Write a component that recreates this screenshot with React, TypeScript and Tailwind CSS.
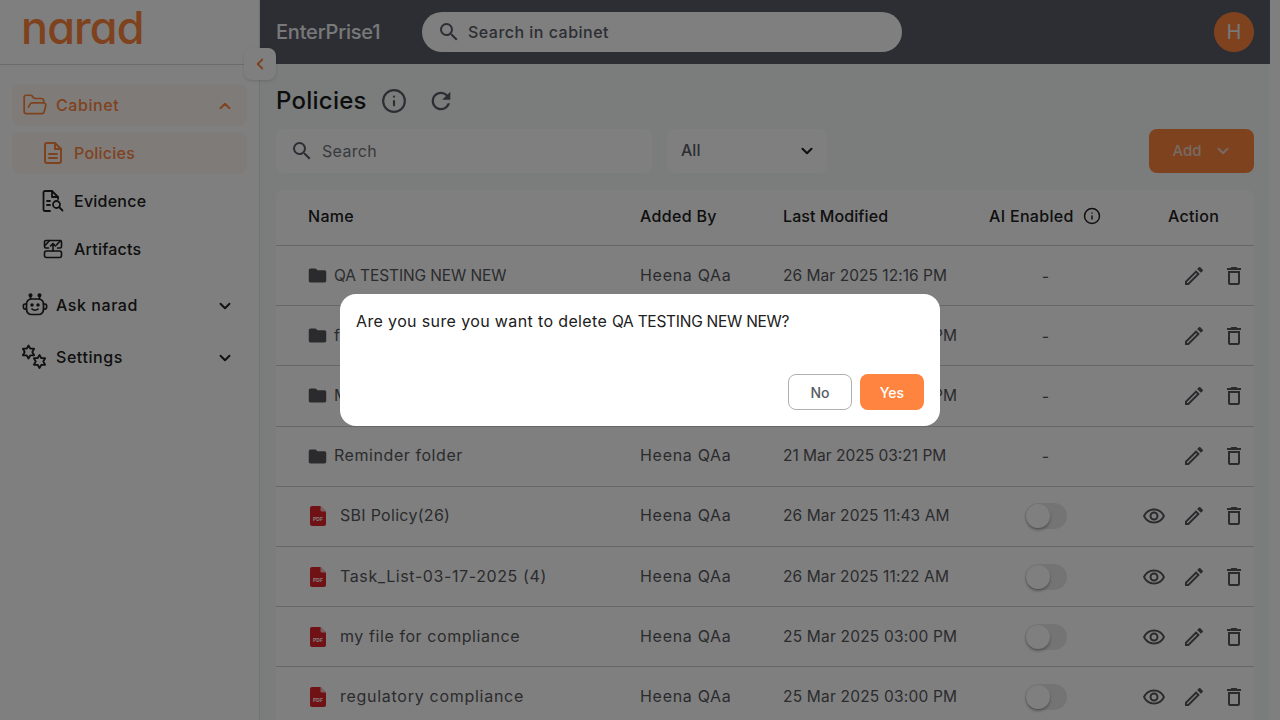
import { ChevronDown, ChevronLeft, ChevronUp, FolderOpen, Info } from 'lucide-react';
import { MdFolder, MdOutlineDelete, MdOutlineEdit, MdOutlineRemoveRedEye, MdRefresh, MdSearch } from 'react-icons/md';

interface Row {
  name: string;
  nameClass: string;
  type: 'folder' | 'pdf';
  date: string;
  dateClass: string;
}

const rows: Row[] = [
  { name: 'QA TESTING NEW NEW', nameClass: 'text-[15.500px] tracking-[-0.007em]', type: 'folder', date: '26 Mar 2025 12:16 PM', dateClass: 'tracking-[0.003em]' },
  { name: 'folder new', nameClass: '-mt-[2px] tracking-[0.035em]', type: 'folder', date: '25 Mar 2025 03:00 PM', dateClass: 'tracking-[0.013em]' },
  { name: 'My folder', nameClass: '-mt-[2px] tracking-[0.035em]', type: 'folder', date: '25 Mar 2025 03:00 PM', dateClass: 'tracking-[0.013em]' },
  { name: 'Reminder folder', nameClass: '-mt-[2px] tracking-[0.035em]', type: 'folder', date: '21 Mar 2025 03:21 PM', dateClass: '-mt-[2px] tracking-[0em]' },
  { name: 'SBI Policy(26)', nameClass: '-mt-[2px] tracking-[0.018em]', type: 'pdf', date: '26 Mar 2025 11:43 AM', dateClass: '-mt-[2px] tracking-[0.007em]' },
  { name: 'Task_List-03-17-2025 (4)', nameClass: '-mt-[2px] tracking-[0.0375em]', type: 'pdf', date: '26 Mar 2025 11:22 AM', dateClass: 'tracking-[0.007em]' },
  { name: 'my file for compliance', nameClass: '-mt-[2px] tracking-[0.036em]', type: 'pdf', date: '25 Mar 2025 03:00 PM', dateClass: 'tracking-[0.013em]' },
  { name: 'regulatory compliance', nameClass: '-mt-[2px] tracking-[0.045em]', type: 'pdf', date: '25 Mar 2025 03:00 PM', dateClass: 'tracking-[0.013em]' },
];

function PolicyIcon() {
  return (
    <svg width="20" height="24" viewBox="0 0 20 24" fill="none" stroke="currentColor" strokeWidth="2" strokeLinejoin="round" strokeLinecap="round">
      <path d="M12 2H4a2 2 0 0 0-2 2v16a2 2 0 0 0 2 2h12a2 2 0 0 0 2-2V8z" />
      <path d="M12 2v6h6" />
      <path d="M6 13h8M6 17h8" />
    </svg>
  );
}

function EvidenceIcon() {
  return (
    <svg width="22" height="24" viewBox="0 0 22 24" fill="none" stroke="currentColor" strokeWidth="1.8" strokeLinejoin="round" strokeLinecap="round">
      <path d="M8 22H3a1.500 1.500 0 0 1-1.500-1.500v-17A1.500 1.500 0 0 1 3 2h7l6 6v2" />
      <path d="M10 2v6h6" />
      <path d="M5 12h3M5 16h3" />
      <circle cx="14.500" cy="15.500" r="3.500" />
      <path d="M17 18l3.500 3.500" />
    </svg>
  );
}

function ArtifactIcon() {
  return (
    <svg width="20" height="20" viewBox="0 0 20 20" fill="none" stroke="currentColor" strokeWidth="1.600" strokeLinejoin="round" strokeLinecap="round">
      <rect x="1.500" y="12" width="17" height="6.500" rx="2" />
      <path d="M5.500 9H3a1.500 1.500 0 0 1-1.500-1.500V3A1.500 1.500 0 0 1 3 1.500h14A1.500 1.500 0 0 1 18.500 3v4.500A1.500 1.500 0 0 1 17 9h-2.500" />
      <path d="M10 12V5M7.500 7L10 4.500 12.500 7" />
      <path d="M2.500 6l4-4.500M13.500 6l4-4.500" />
    </svg>
  );
}

function RobotIcon() {
  return (
    <svg width="26" height="24" viewBox="0 0 26 24" fill="none" stroke="currentColor" strokeWidth="1.700" strokeLinejoin="round" strokeLinecap="round">
      <rect x="4.500" y="6" width="17" height="15.500" rx="5" />
      <path d="M4.500 11H3a1.600 1.600 0 0 0-1.600 1.600v2A1.600 1.600 0 0 0 3 16.200h1.500M21.500 11H23a1.600 1.600 0 0 1 1.600 1.600v2a1.600 1.600 0 0 1-1.600 1.600h-1.500" />
      <path d="M8.500 6V3M17.500 6V3" />
      <circle cx="8.500" cy="2.200" r="1.200" fill="currentColor" />
      <circle cx="17.500" cy="2.200" r="1.200" fill="currentColor" />
      <circle cx="10" cy="12" r="0.900" fill="currentColor" />
      <circle cx="16" cy="12" r="0.900" fill="currentColor" />
      <path d="M10 16c1.600 1.500 4.400 1.500 6 0" />
    </svg>
  );
}

function GearsIcon() {
  const gear = (x: number, y: number) => (
    <g transform={`translate(${x} ${y})`}>
      <path d="M0-6.500l1.900 3.200h3.700l-1.800 3.300 1.800 3.300h-3.700l-1.900 3.200-1.900-3.200h-3.700l1.800-3.300-1.800-3.300h3.700z" />
    </g>
  );
  return (
    <svg width="26" height="26" viewBox="0 0 26 26" fill="none" stroke="currentColor" strokeWidth="1.800" strokeLinejoin="round">
      {gear(6.500, 8)}
      {gear(17.500, 17.500)}
    </svg>
  );
}

function PdfIcon() {
  return (
    <svg width="16" height="20" viewBox="0 0 16 20">
      <path d="M2 0h8.500L16 5.500V18a2 2 0 0 1-2 2H2a2 2 0 0 1-2-2V2a2 2 0 0 1 2-2z" fill="#e0222a" />
      <path d="M10.500 0L16 5.500h-4a1.500 1.500 0 0 1-1.500-1.500z" fill="#f6c3c5" />
      <text x="8" y="14.500" textAnchor="middle" fontSize="5" fontWeight="700" fill="#ffffff" fontFamily="Inter, sans-serif">PDF</text>
    </svg>
  );
}

function NavRow({ icon, label, active, chevron, sub }: { icon: React.ReactNode; label: string; active?: boolean; chevron?: 'up' | 'down'; sub?: boolean }) {
  return (
    <div
      className={`mx-3 flex h-[42px] items-center rounded-lg pr-[13px] pt-[2px] ${sub ? 'pl-[26px]' : 'pl-[10px]'} ${
        active ? 'bg-[#fff7f2] text-[#ff843f]' : 'text-[#202020]'
      }`}
    >
      <span className={`-mt-[2px] flex h-6 items-center justify-center ${sub ? 'w-[36px] pr-[6px]' : 'w-[34px] pr-[8px]'}`}>{icon}</span>
      <span className={`-mt-[2px] flex-1 text-[16px] font-medium ${sub ? 'tracking-[0.015em]' : 'tracking-[0.035em]'}`}>{label}</span>
      {chevron === 'up' && <ChevronUp className="h-[18px] w-[18px]" strokeWidth={2.500} />}
      {chevron === 'down' && <ChevronDown className="h-[18px] w-[18px]" strokeWidth={2.500} />}
    </div>
  );
}

function Toggle() {
  return (
    <div className="flex h-[26px] w-[42px] items-center rounded-full bg-[#e9e9ea] p-[1px]">
      <div className="h-6 w-6 rounded-full bg-white shadow-[0_2px_3px_rgba(0,0,0,0.3)]" />
    </div>
  );
}

export default function App() {
  return (
    <div className="flex h-screen overflow-hidden bg-white pr-[10px] font-[family-name:Inter,sans-serif]">
      <aside className="flex w-[260px] flex-shrink-0 flex-col border-r border-[#e2e4e4] bg-white">
        <div className="flex h-[65px] flex-shrink-0 items-center border-b border-[#d8d8d8] pl-[21px]">
          <span className="-mt-[9px] text-[45px] font-medium leading-none tracking-[-0.02em] text-[#ff843f] [font-feature-settings:'cv11']">narad</span>
        </div>
        <nav className="flex flex-col pt-[19px]">
          <NavRow icon={<FolderOpen className="h-[26px] w-[26px]" strokeWidth={1.600} />} label="Cabinet" active chevron="up" />
          <div className="mt-[6px] flex flex-col gap-[6px]">
            <NavRow icon={<PolicyIcon />} label="Policies" active sub />
            <NavRow icon={<EvidenceIcon />} label="Evidence" sub />
            <NavRow icon={<ArtifactIcon />} label="Artifacts" sub />
          </div>
          <div className="mt-[14px]">
            <NavRow icon={<RobotIcon />} label="Ask narad" chevron="down" />
          </div>
          <div className="mt-[10px]">
            <NavRow icon={<GearsIcon />} label="Settings" chevron="down" />
          </div>
        </nav>
      </aside>

      <main className="flex min-w-0 flex-1 flex-col bg-[#f6faf8]">
        <header className="flex h-16 flex-shrink-0 items-center bg-[#585c66] pl-4 pr-4">
          <span className="w-[146px] text-[20px] font-medium tracking-[-0.01em] text-[#f0f2f5]">EnterPrise1</span>
          <div className="flex h-10 w-[480px] items-center rounded-full bg-white pl-[15px] text-[#585c66]">
            <MdSearch className="h-6 w-6" />
            <span className="ml-[7px] text-[16px] font-medium tracking-[0.03em]">Search in cabinet</span>
          </div>
          <div className="ml-auto flex h-10 w-10 items-center justify-center rounded-full bg-[#ff843f] text-[20px] text-[#f0f0f0]">H</div>
        </header>

        <div className="flex flex-col px-4 pt-[19px]">
          <div className="flex h-9 items-center">
            <h1 className="text-[24px] font-medium tracking-[0.01em] text-[#1a1a1a]">Policies</h1>
            <Info className="ml-[14px] h-[26px] w-[26px] text-[#585c66]" strokeWidth={2} />
            <MdRefresh className="ml-[20px] h-[28px] w-[28px] text-[#585c66]" />
          </div>

          <div className="mt-[10px] flex h-11 items-stretch">
            <div className="flex w-[376px] items-center rounded-lg bg-white pl-[14px] text-[#585c66]">
              <MdSearch className="h-6 w-6" />
              <span className="ml-[8px] text-[16px] tracking-[0.02em] text-[#70747c]">Search</span>
            </div>
            <div className="ml-[15px] flex w-[160px] items-center justify-between rounded-lg bg-white pl-[14px] pr-[11px] text-[#585c66]">
              <span className="-mt-[2px] text-[16px] font-medium">All</span>
              <ChevronDown className="h-[18px] w-[18px] text-[#202020]" strokeWidth={2.800} />
            </div>
            <button className="ml-auto flex w-[105px] items-center justify-center gap-[12px] rounded-lg bg-[#ff843f] pl-[1px] text-[#ecd4c6]">
              <span className="text-[15px] font-medium">Add</span>
              <ChevronDown className="h-[18px] w-[18px]" strokeWidth={2.500} />
            </button>
          </div>

          <div className="mt-[17px] overflow-hidden rounded-t-lg bg-white">
            <div className="grid h-[56px] grid-cols-[332px_143px_206px_113px_152px] items-center border-b border-[#cfcfcf] pb-[3px] pl-8 text-[16px] font-medium tracking-[0.02em] text-[#202020]">
              <span>Name</span>
              <span>Added By</span>
              <span className="tracking-[0.005em]">Last Modified</span>
              <span className="flex items-center">
                AI Enabled
                <Info className="ml-[9px] h-[18px] w-[18px]" strokeWidth={2} />
              </span>
              <span className="pl-[66px]">Action</span>
            </div>
            {rows.map((row) => (
              <div
                key={row.name}
                className="grid h-[60.200px] grid-cols-[332px_143px_206px_113px_152px] items-center border-b border-[#cfcfcf] pl-8 text-[16px] text-[#56575c]"
              >
                <span className="flex items-center">
                  {row.type === 'folder' ? (
                    <>
                      <MdFolder className="-ml-[1px] h-[21px] w-[21px] flex-shrink-0" />
                      <span className={`ml-[6px] truncate ${row.nameClass}`}>{row.name}</span>
                    </>
                  ) : (
                    <>
                      <span className="ml-[2px] flex flex-shrink-0"><PdfIcon /></span>
                      <span className={`ml-[14px] truncate ${row.nameClass}`}>{row.name}</span>
                    </>
                  )}
                </span>
                <span className="-mt-[2px] tracking-[0.044em]">Heena QAa</span>
                <span className={`text-[15.500px] ${row.dateClass}`}>{row.date}</span>
                <span className="flex justify-center">
                  {row.type === 'folder' ? '-' : <Toggle />}
                </span>
                <span className="flex items-center justify-end">
                  {row.type === 'pdf' && (
                    <span className="flex h-10 w-10 items-center justify-center"><MdOutlineRemoveRedEye className="h-6 w-6" /></span>
                  )}
                  <span className="flex h-10 w-10 items-center justify-center"><MdOutlineEdit className="h-6 w-6" /></span>
                  <span className="flex h-10 w-10 items-center justify-center"><MdOutlineDelete className="h-6 w-6" /></span>
                </span>
              </div>
            ))}
          </div>
        </div>
      </main>

      <button className="absolute left-[244px] top-[48px] flex h-8 w-8 items-center justify-center rounded-lg bg-white text-[#ff843f] shadow-[0_1px_3px_rgba(0,0,0,0.15)]">
        <ChevronLeft className="h-[18px] w-[18px]" strokeWidth={2.500} />
      </button>

      <div className="fixed inset-0 flex items-center justify-center bg-black/50">
        <div className="flex h-[132px] w-[600px] flex-col rounded-2xl bg-white p-4">
          <p className="text-[16px] leading-[22px] tracking-[0.023em] text-[#202020]">
            Are you sure you want to delete <span className="text-[15.500px] tracking-[-0.017em]">QA TESTING NEW NEW?</span>
          </p>
          <div className="mt-auto flex justify-end gap-2">
            <button className="h-9 w-16 rounded-lg border border-[#b0b0b0] bg-white text-[14px] font-medium text-[#585c66]">No</button>
            <button className="h-9 w-16 rounded-lg bg-[#ff843f] text-[14px] font-medium text-white">Yes</button>
          </div>
        </div>
      </div>
    </div>
  );
}
